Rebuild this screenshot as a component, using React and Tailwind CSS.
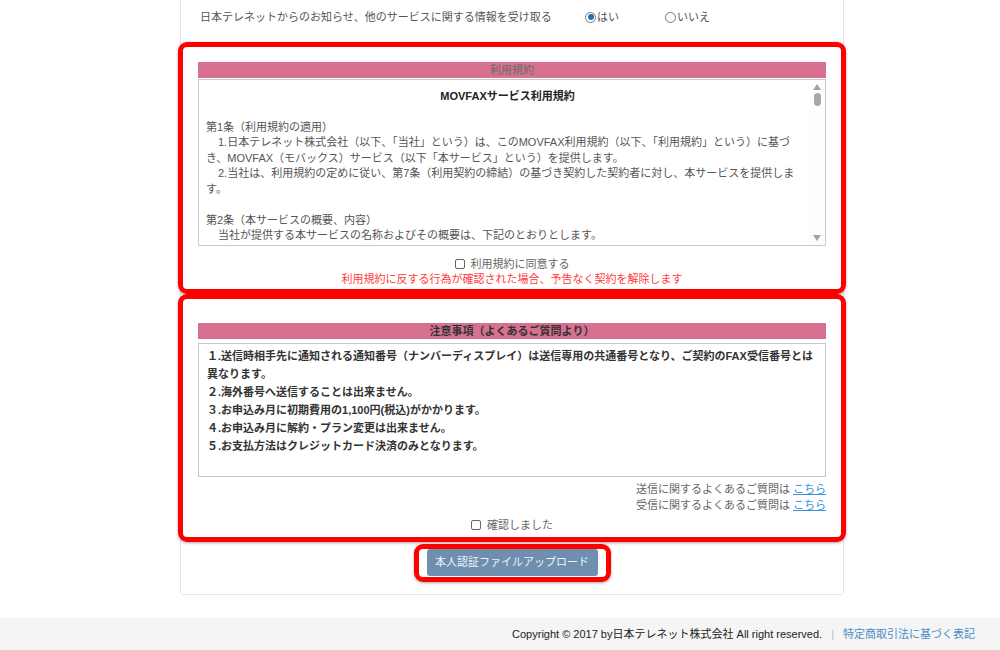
import React from "react";

const font = { fontFamily: '"Liberation Sans", "Noto Sans CJK JP", sans-serif' };

function Radio({ checked }) {
  return (
    <span className="inline-flex w-[11px] h-[11px] rounded-full border border-[#777] items-center justify-center bg-white mr-[1px]">
      {checked && <span className="w-[6px] h-[6px] rounded-full bg-[#1f6fb5]" />}
    </span>
  );
}

function Checkbox() {
  return <span className="inline-block w-[10px] h-[10px] border border-[#666] rounded-[2px] bg-white mr-[6px]" />;
}

function FakeScrollbar() {
  return (
    <div className="w-[16px] flex flex-col items-center justify-between py-[4px] bg-[#fdfdfd]">
      <div className="flex flex-col items-center">
        <svg width="8" height="6" viewBox="0 0 8 6"><path d="M0 6 L4 0 L8 6 Z" fill="#a3a3a3" /></svg>
        <div className="w-[7px] h-[13px] rounded-full bg-[#a8a8a8] mt-[3px]" />
      </div>
      <svg width="8" height="6" viewBox="0 0 8 6"><path d="M0 0 L8 0 L4 6 Z" fill="#a3a3a3" /></svg>
    </div>
  );
}

export default function App() {
  return (
    <div className="min-h-[650px] bg-white text-[11px] text-[#555]" style={font}>
      <div className="ml-[180px] w-[664px] border-x border-b border-[#e6e6e6] rounded-b-[4px] pb-[12px]">
        {/* お知らせ */}
        <div className="flex items-center h-[36px] pl-[19px] pb-[2px]">
          <span className="w-[385px]">日本テレネットからのお知らせ、他のサービスに関する情報を受け取る</span>
          <label className="flex items-center w-[80px]"><Radio checked />はい</label>
          <label className="flex items-center"><Radio />いいえ</label>
        </div>

        {/* 利用規約 */}
        <div className="-mx-[3px] mt-[6px] border-[5px] border-[#ff0000] rounded-[9px] px-[15px] pt-[15px] pb-[2px] shadow-[0_1px_3px_rgba(0,0,0,0.35)]">
          <div className="h-[16px] bg-[#d7718f] text-center leading-[16px] text-[#6b6b6b]">利用規約</div>
          <div className="mt-[1px] h-[167px] border border-[#c8c8c8] flex overflow-hidden">
            <div className="flex-1 pl-[7px] pt-[8px] leading-[15.5px] whitespace-nowrap">
              <div className="text-center font-bold text-[#222] leading-[16px]">MOVFAXサービス利用規約</div>
              <div className="h-[15.5px]" />
              <div>第1条（利用規約の適用）</div>
              <div className="pl-[12px]">1.日本テレネット株式会社（以下、「当社」という）は、このMOVFAX利用規約（以下、「利用規約」という）に基づ</div>
              <div>き、MOVFAX（モバックス）サービス（以下「本サービス」という）を提供します。</div>
              <div className="pl-[12px]">2.当社は、利用規約の定めに従い、第7条（利用契約の締結）の基づき契約した契約者に対し、本サービスを提供しま</div>
              <div>す。</div>
              <div className="h-[15.5px]" />
              <div>第2条（本サービスの概要、内容）</div>
              <div className="pl-[12px]">当社が提供する本サービスの名称およびその概要は、下記のとおりとします。</div>
            </div>
            <FakeScrollbar />
          </div>
          <div className="mt-[10px] flex items-center justify-center leading-[16px] text-[#666]"><Checkbox />利用規約に同意する</div>
          <div className="text-center leading-[15px] text-[#ff3b3b]">利用規約に反する行為が確認された場合、予告なく契約を解除します</div>
        </div>

        {/* 注意事項 */}
        <div className="-mx-[3px] mt-0 border-[5px] border-[#ff0000] rounded-[9px] px-[15px] pt-[24px] pb-[4px] shadow-[0_1px_3px_rgba(0,0,0,0.35)]">
          <div className="h-[16px] bg-[#d7718f] text-center leading-[16px] font-bold text-[#333]">注意事項（よくあるご質問より）</div>
          <div className="mt-[4px] h-[134px] border border-[#c8c8c8] pl-[8px] pt-[3px] leading-[18px] font-bold text-[#333] whitespace-nowrap">
            <div>１.送信時相手先に通知される通知番号（ナンバーディスプレイ）は送信専用の共通番号となり、ご契約のFAX受信番号とは</div>
            <div>異なります。</div>
            <div>２.海外番号へ送信することは出来ません。</div>
            <div>３.お申込み月に初期費用の1,100円(税込)がかかります。</div>
            <div>４.お申込み月に解約・プラン変更は出来ません。</div>
            <div>５.お支払方法はクレジットカード決済のみとなります。</div>
          </div>
          <div className="mt-[4px] text-right leading-[16px] text-[#666]">
            <div>送信に関するよくあるご質問は <a className="text-[#3d8fd6] underline">こちら</a></div>
            <div>受信に関するよくあるご質問は <a className="text-[#3d8fd6] underline">こちら</a></div>
          </div>
          <div className="mt-[4px] flex items-center justify-center leading-[16px] text-[#666]"><Checkbox />確認しました</div>
        </div>

        {/* ボタン */}
        <div className="flex justify-center mt-[2px]">
          <div className="border-[5px] border-[#ff0000] rounded-[9px] px-[8px] pt-0 pb-[1px] shadow-[0_1px_3px_rgba(0,0,0,0.35)]">
            <button className="w-[171px] h-[27px] bg-[#6f8fb0] rounded-[3px] text-[#eef2f7] text-[11px]">本人認証ファイルアップロード</button>
          </div>
        </div>
      </div>

      {/* フッター */}
      <div className="mt-[23px] h-[32px] bg-[#f5f5f5] flex items-center justify-end pr-[25px] text-[11px]">
        <span className="text-[#222]">Copyright © 2017 by日本テレネット株式会社 All right reserved.</span>
        <span className="mx-[9px] text-[#bbb]">|</span>
        <a className="text-[#4a8cc7]">特定商取引法に基づく表記</a>
      </div>
    </div>
  );
}
